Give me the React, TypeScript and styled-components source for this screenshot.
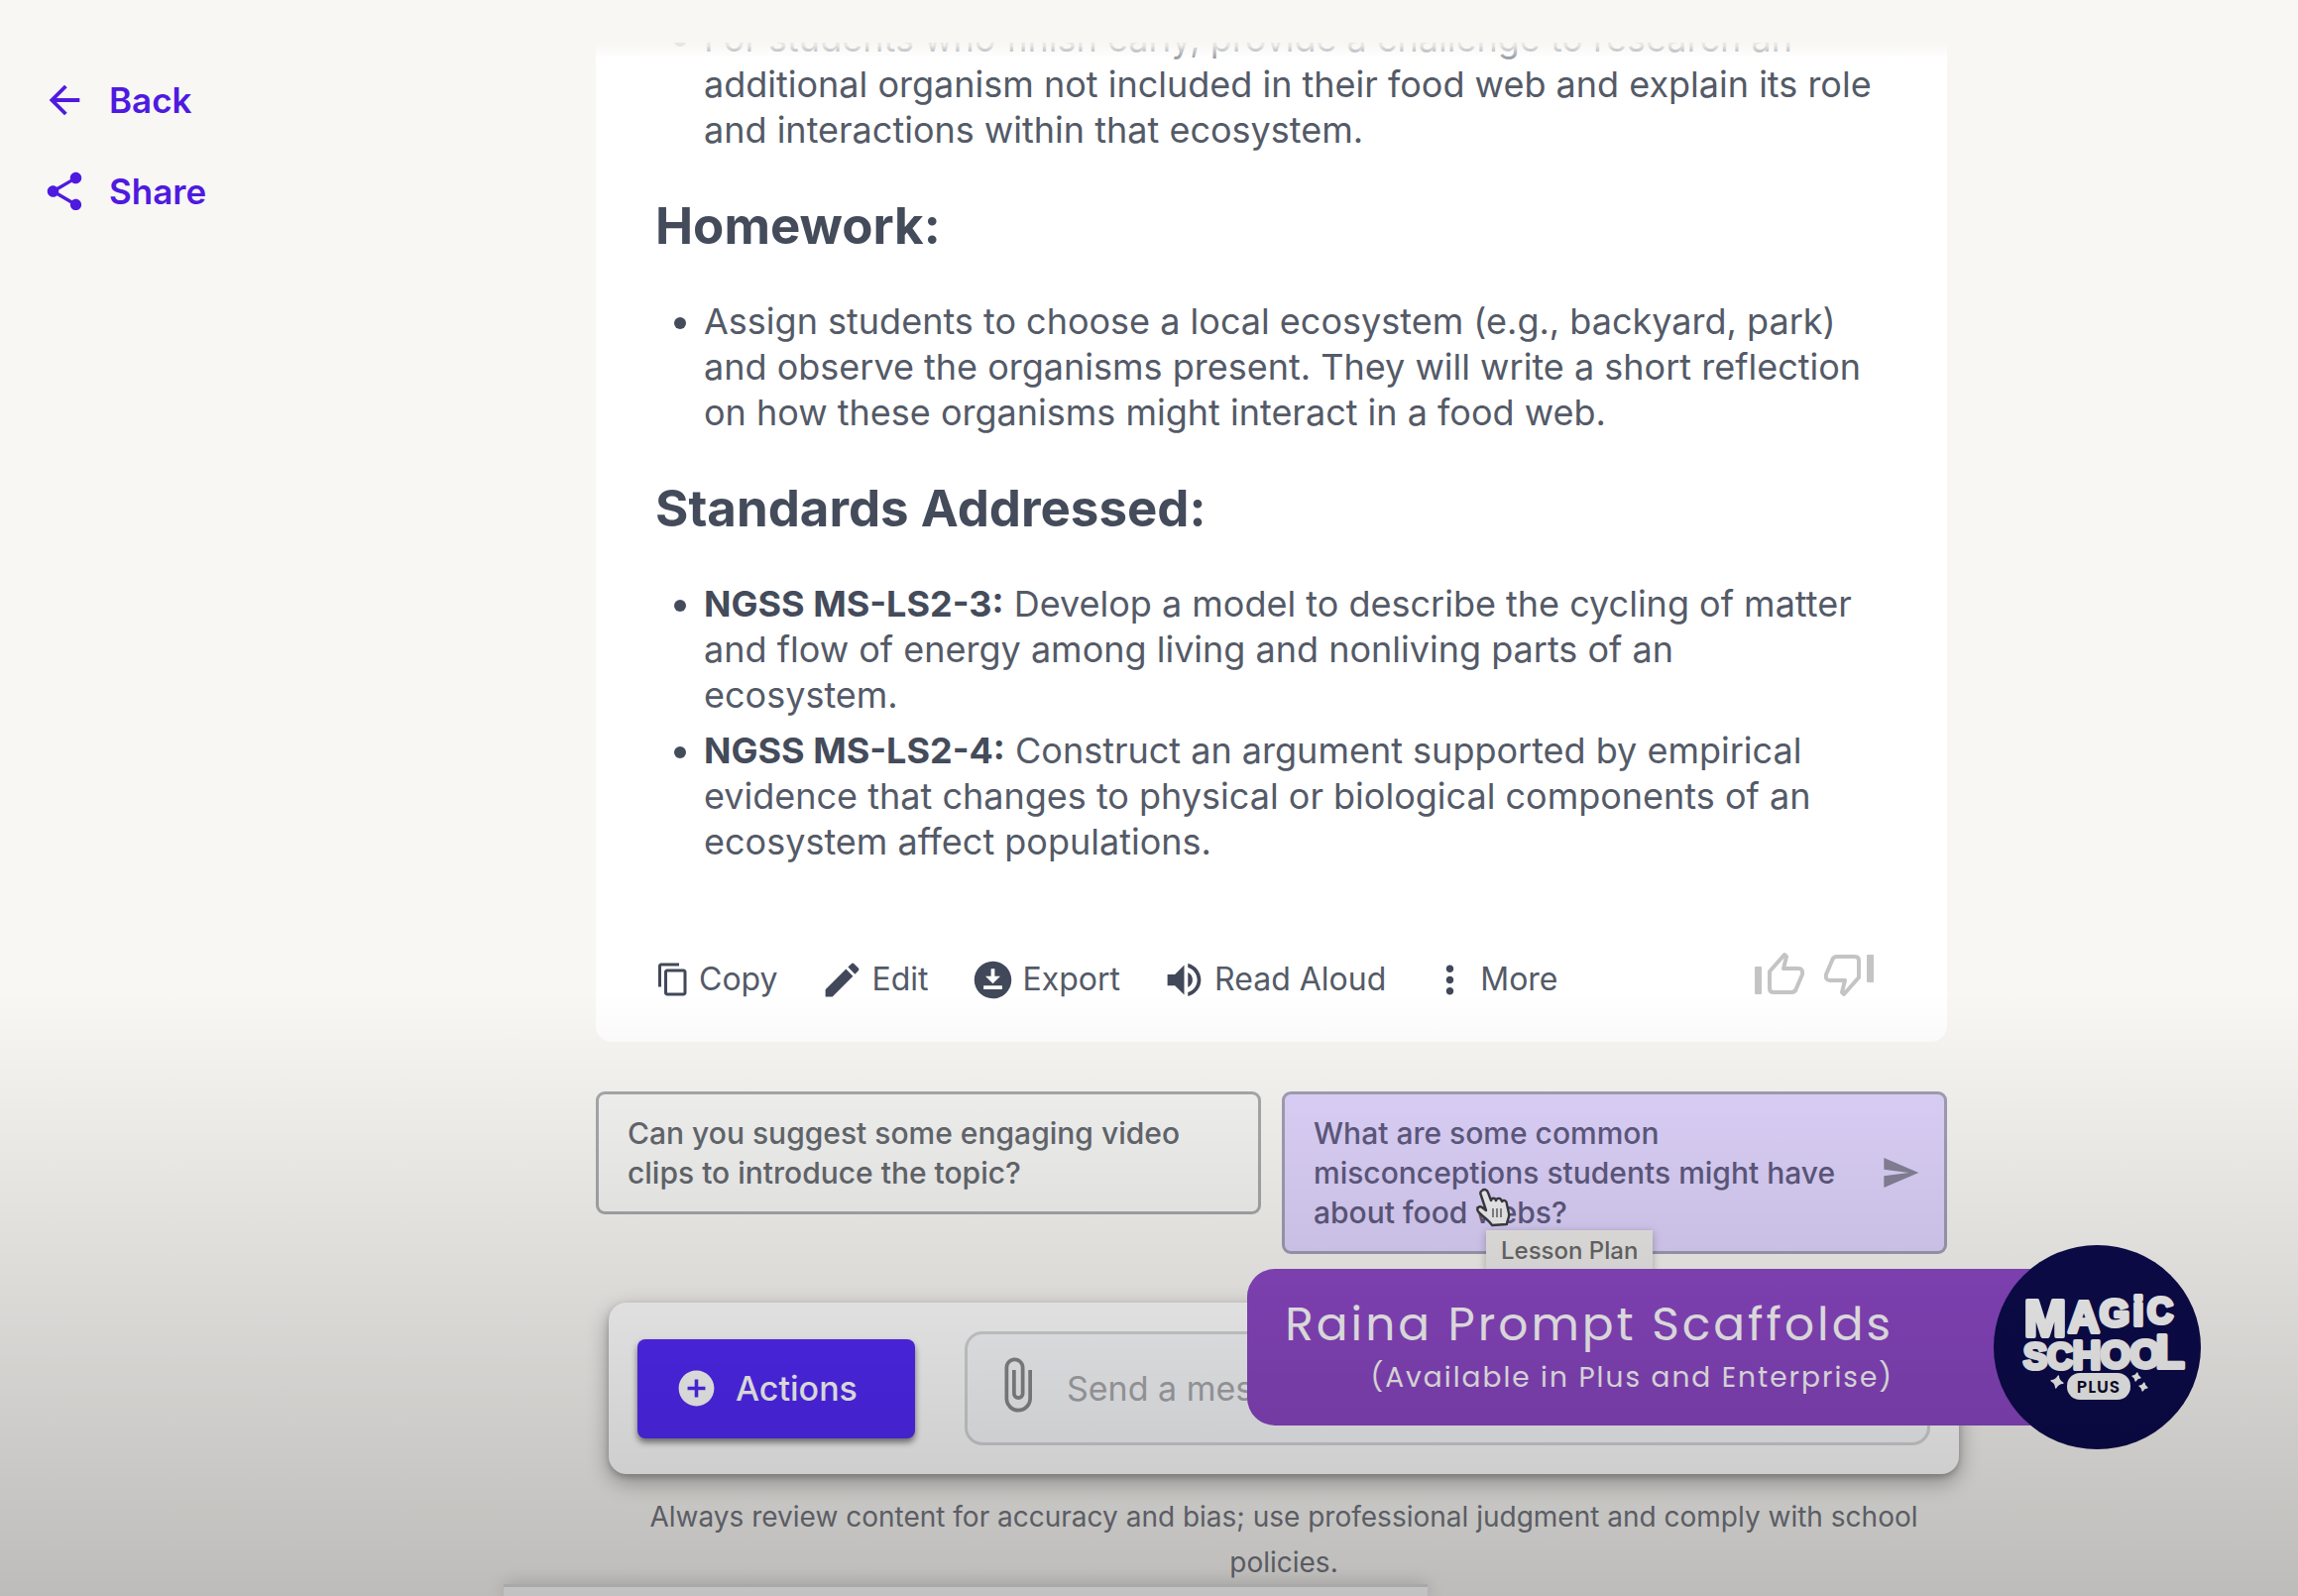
import React from "react";
import styled, { createGlobalStyle } from "styled-components";
import {
  MdAddCircle,
  MdArrowBack,
  MdAttachFile,
  MdContentCopy,
  MdDownloadForOffline,
  MdEdit,
  MdMoreVert,
  MdSend,
  MdShare,
  MdVolumeUp,
} from "react-icons/md";

const GlobalStyle = createGlobalStyle`
  *, *::before, *::after { box-sizing: border-box; }
  html, body { margin: 0; background: #f8f7f4; }
  body { font-family: Inter, "Liberation Sans", sans-serif; color: #545a67; }
  button, input { font: inherit; color: inherit; }
`;

const Page = styled.div`
  position: relative;
  min-height: 100vh;
  overflow: hidden;
  display: grid;
  grid-template-columns: 601px minmax(0, 1fr) 354px;
  align-items: start;
`;

const SideNav = styled.nav`
  display: flex;
  flex-direction: column;
  align-items: flex-start;
  gap: 44px;
  padding: 77px 0 0 42px;
`;

const NavLink = styled.a`
  display: flex;
  align-items: center;
  gap: 22px;
  color: #4f1ae0;
  font-size: 35px;
  line-height: 48px;
  font-weight: 600;
  text-decoration: none;
`;

const Main = styled.main`
  display: flex;
  flex-direction: column;
`;

const Card = styled.article`
  position: relative;
  margin-top: 43px;
  padding: 0 60px 34px;
  overflow: hidden;
  background: #fff;
  border-radius: 0 0 16px 16px;

  &::before {
    content: "";
    position: absolute;
    inset: 0 0 auto;
    height: 26px;
    background: linear-gradient(rgba(248, 247, 244, 0.9) 10%, rgba(255, 255, 255, 0.4) 60%, rgba(255, 255, 255, 0));
  }
`;

const Bullets = styled.ul<{ $clipped?: boolean }>`
  display: flex;
  flex-direction: column;
  gap: 10px;
  margin: ${(p) => (p.$clipped ? "-27px" : "0")} 0 0;
  padding: 0 12px 0 49px;
  font-size: 36px;
  line-height: 46px;

  strong { color: #444b5a; font-weight: 700; }
  li::marker { color: #444b5a; }
`;

const Heading = styled.h2`
  margin: 42px 0 41px;
  color: #444b5a;
  font-size: 51px;
  line-height: 64px;
  font-weight: 700;
`;

const Toolbar = styled.div`
  display: flex;
  align-items: center;
  gap: 42px;
  margin-top: 87px;
`;

const ToolButton = styled.button`
  display: flex;
  align-items: center;
  gap: 8px;
  padding: 0;
  border: 0;
  background: none;
  font-size: 32px;
  line-height: 46px;

  svg { color: #414859; }
`;

const Votes = styled.div`
  display: flex;
  gap: 20px;
  margin-left: auto;
  padding: 0 14px 10px 0;
`;

const VoteButton = styled.button<{ $down?: boolean }>`
  display: flex;
  padding: 0;
  border: 0;
  background: none;
  color: #c4c4c4;

  svg { transform: ${(p) => (p.$down ? "rotate(180deg)" : "none")}; }
`;

const Suggestions = styled.div`
  display: grid;
  grid-template-columns: 1fr 1fr;
  align-items: start;
  gap: 21px;
  margin-top: 50px;
`;

const Suggestion = styled.button<{ $active?: boolean }>`
  position: relative;
  display: flex;
  align-items: center;
  justify-content: space-between;
  padding: 19px 24px 19px 29px;
  border: 3px solid ${(p) => (p.$active ? "#a39fb5" : "#a9aaad")};
  border-radius: 9px;
  background: ${(p) => (p.$active ? "#e0d4fd" : "#f6f6f5")};
  color: ${(p) => (p.$active ? "#5f5b80" : "#65696e")};
  font-size: 30px;
  line-height: 40px;
  font-weight: 500;
  text-align: left;

  svg { flex: none; }
`;

const SuggestionText = styled.span`
  max-width: 570px;
`;

const SendMark = styled.span`
  display: flex;
  color: #88849a;
`;

const Pointer = styled.span`
  position: absolute;
  left: 192px;
  top: 94px;
  display: flex;
`;

const Tip = styled.span`
  position: absolute;
  left: 203px;
  top: 137px;
  padding: 0 15px;
  background: #edecea;
  box-shadow: 0 2px 8px rgba(0, 0, 0, 0.25);
  color: #6a6a6a;
  font-size: 24px;
  line-height: 42px;
  font-weight: 500;
  white-space: nowrap;
`;

const Composer = styled.form`
  display: flex;
  align-items: center;
  gap: 50px;
  margin: 49px -12px 0 13px;
  padding: 29px;
  border-radius: 18px;
  background: #fff;
  box-shadow: 0 8px 22px rgba(0, 0, 0, 0.32), 0 3px 6px rgba(0, 0, 0, 0.2);
`;

const ActionsButton = styled.button`
  display: flex;
  align-items: center;
  gap: 18px;
  height: 100px;
  padding: 0 58px 0 38px;
  border: 0;
  border-radius: 8px;
  background: #5229f7;
  box-shadow: 0 4px 6px rgba(0, 0, 0, 0.5);
  color: #fff;
  font-size: 34px;
  font-weight: 500;
`;

const MessageBox = styled.label`
  flex: 1;
  min-width: 0;
  display: flex;
  align-items: center;
  gap: 20px;
  height: 115px;
  padding: 0 20px;
  border: 3px solid #d6d7d9;
  border-radius: 18px;
  background: #fafbfe;
  color: #898a8d;

  svg { flex: none; margin-bottom: 8px; }
`;

const MessageInput = styled.input`
  flex: 1;
  min-width: 0;
  padding: 0;
  border: 0;
  outline: 0;
  background: none;
  font-size: 34px;

  &::placeholder { color: #aaabae; opacity: 1; }
`;

const Disclaimer = styled.p`
  margin: 20px -12px 0 13px;
  padding: 0 40px;
  color: #73757e;
  font-size: 28px;
  line-height: 46px;
  text-align: center;
`;

const BottomSheet = styled.div`
  position: absolute;
  left: 508px;
  bottom: 0;
  width: 932px;
  height: 12px;
  border-top: 3px solid #dcdcdc;
  background: #ffffff;
  box-shadow: 0 0 18px rgba(0, 0, 0, 0.2);
`;

const Banner = styled.aside`
  position: absolute;
  right: 98px;
  bottom: 148px;
  display: flex;
  align-items: center;
`;

const BannerLabel = styled.div`
  width: 857px;
  margin-right: -104px;
  padding: 24px 205px 26px 0;
  border-radius: 28px 0 0 28px;
  background: #8b47c4;
  color: #f9f7fa;
  font-family: Poppins, Lato, sans-serif;
  text-align: right;
`;

const BannerTitle = styled.div`
  font-size: 47px;
  line-height: 64px;
  letter-spacing: 3px;
`;

const BannerNote = styled.div`
  font-size: 28px;
  line-height: 44px;
  letter-spacing: 2px;
`;

const Badge = styled.div`
  position: relative;
  display: flex;
  flex: none;
  width: 209px;
  height: 206px;
  border-radius: 50%;
  background: #0c0b4c;
`;

const Shade = styled.div`
  position: absolute;
  inset: auto 0 0;
  height: 610px;
  background: linear-gradient(rgba(0, 0, 0, 0), rgba(0, 0, 0, 0.24));
  pointer-events: none;
`;

const Thumb = () => (
  <svg width="50" height="48" viewBox="0 0 50 48" aria-hidden="true">
    <rect x="0" y="16" width="7" height="28" rx="1" fill="currentColor" />
    <path
      d="M15 21 L30 4 L32 6 L29 18 H44 Q49 18 48 24 L42 38 Q41 42 37 42 H19 Q15 42 15 38 Z"
      fill="none"
      stroke="currentColor"
      strokeWidth="4"
      strokeLinejoin="round"
    />
  </svg>
);

const HandPointer = () => (
  <svg width="36" height="40" viewBox="0 0 36 40" aria-hidden="true">
    <path
      d="M7 3 C9 1 12 2 13 5 L16 13 C17 10 20 10 21 13 C22 10 26 10 27 14 C29 12 32 13 32 17 L34 26 C35 30 32 33 32 37 L17 38 C14 33 7 29 3 24 C1 21 4 18 7 20 L11 23 L6 8 C5 6 5 4 7 3 Z"
      fill="#f3f3f3"
      stroke="#3c3b44"
      strokeWidth="2.4"
      strokeLinejoin="round"
    />
    <path d="M18 21 V30 M22 21 V30 M26 21 V30" stroke="#6c6b70" strokeWidth="1.6" />
  </svg>
);

type Glyph = { c: string; x: number; y: number; size: number };

const LOGO_ROWS: Glyph[][] = [
  [
    { c: "M", x: 52, y: 92, size: 51 },
    { c: "A", x: 91, y: 88, size: 44 },
    { c: "G", x: 122, y: 82, size: 39 },
    { c: "i", x: 146, y: 81, size: 41 },
    { c: "C", x: 168, y: 79, size: 36 },
  ],
  [
    { c: "S", x: 42, y: 125, size: 36 },
    { c: "C", x: 67, y: 125, size: 36 },
    { c: "H", x: 94, y: 125, size: 40 },
    { c: "O", x: 123, y: 124, size: 39 },
    { c: "O", x: 153, y: 124, size: 40 },
    { c: "L", x: 178, y: 124, size: 48 },
  ],
];

const Sparkle = ({ x, y, r }: { x: number; y: number; r: number }) => (
  <path
    transform={`translate(${x} ${y}) rotate(12)`}
    d={`M0 ${-r} Q${r / 5} ${-r / 5} ${r} 0 Q${r / 5} ${r / 5} 0 ${r} Q${-r / 5} ${r / 5} ${-r} 0 Q${-r / 5} ${-r / 5} 0 ${-r} Z`}
    fill="#fafafa"
    stroke="#fafafa"
    strokeWidth="1.5"
    strokeLinejoin="round"
  />
);

const Logo = () => (
  <svg width="209" height="206" viewBox="0 0 209 206" role="img" aria-label="Magic School Plus">
    <g
      fill="#fafafa"
      stroke="#fafafa"
      strokeWidth="4"
      strokeLinejoin="round"
      fontFamily="'Liberation Sans', Arial, sans-serif"
      fontWeight="700"
      textAnchor="middle"
    >
      {LOGO_ROWS.map((row, r) => (
        <text key={r}>
          {row.map((g, i) => (
            <tspan key={i} x={g.x} y={g.y} fontSize={g.size}>
              {g.c}
            </tspan>
          ))}
        </text>
      ))}
    </g>
    <rect x="74" y="129" width="64" height="27" rx="13" fill="#fafafa" />
    <text x="106" y="149" fontSize="17" fontWeight="600" letterSpacing="1" textAnchor="middle" fontFamily="Poppins, Lato, sans-serif" fill="#0c0b2c">
      PLUS
    </text>
    <Sparkle x={64} y={138} r={6} />
    <Sparkle x={144} y={133} r={4} />
    <Sparkle x={151} y={143} r={4} />
  </svg>
);

export default function App() {
  return (
    <>
      <GlobalStyle />
      <Page>
        <SideNav>
          <NavLink href="#back">
            <MdArrowBack size={46} />
            Back
          </NavLink>
          <NavLink href="#share">
            <MdShare size={46} />
            Share
          </NavLink>
        </SideNav>

        <Main>
          <Card>
            <Bullets $clipped>
              <li>
                For students who finish early, provide a challenge to research an additional organism not included in
                their food web and explain its role and interactions within that ecosystem.
              </li>
            </Bullets>
            <Heading>Homework:</Heading>
            <Bullets>
              <li>
                Assign students to choose a local ecosystem (e.g., backyard, park) and observe the organisms present.
                They will write a short reflection on how these organisms might interact in a food web.
              </li>
            </Bullets>
            <Heading>Standards Addressed:</Heading>
            <Bullets>
              <li>
                <strong>NGSS MS-LS2-3:</strong> Develop a model to describe the cycling of matter and flow of energy
                among living and nonliving parts of an ecosystem.
              </li>
              <li>
                <strong>NGSS MS-LS2-4:</strong> Construct an argument supported by empirical evidence that changes to
                physical or biological components of an ecosystem affect populations.
              </li>
            </Bullets>
            <Toolbar>
              <ToolButton type="button">
                <MdContentCopy size={36} />
                Copy
              </ToolButton>
              <ToolButton type="button">
                <MdEdit size={45} />
                Edit
              </ToolButton>
              <ToolButton type="button">
                <MdDownloadForOffline size={45} />
                Export
              </ToolButton>
              <ToolButton type="button">
                <MdVolumeUp size={45} />
                Read Aloud
              </ToolButton>
              <ToolButton type="button">
                <MdMoreVert size={45} />
                More
              </ToolButton>
              <Votes>
                <VoteButton type="button" aria-label="Good response">
                  <Thumb />
                </VoteButton>
                <VoteButton type="button" aria-label="Bad response" $down>
                  <Thumb />
                </VoteButton>
              </Votes>
            </Toolbar>
          </Card>

          <Suggestions>
            <Suggestion type="button">
              <SuggestionText>Can you suggest some engaging video clips to introduce the topic?</SuggestionText>
            </Suggestion>
            <Suggestion type="button" $active>
              <SuggestionText>What are some common misconceptions students might have about food webs?</SuggestionText>
              <SendMark>
                <MdSend size={40} />
              </SendMark>
              <Tip>Lesson Plan</Tip>
              <Pointer>
                <HandPointer />
              </Pointer>
            </Suggestion>
          </Suggestions>

          <Composer>
            <ActionsButton type="button">
              <MdAddCircle size={43} />
              Actions
            </ActionsButton>
            <MessageBox>
              <MdAttachFile size={60} />
              <MessageInput type="text" placeholder="Send a message" aria-label="Send a message" />
            </MessageBox>
          </Composer>
          <Disclaimer>
            Always review content for accuracy and bias; use professional judgment and comply with school policies.
          </Disclaimer>
        </Main>

        <BottomSheet />
        <Banner>
          <BannerLabel>
            <BannerTitle>Raina Prompt Scaffolds</BannerTitle>
            <BannerNote>(Available in Plus and Enterprise)</BannerNote>
          </BannerLabel>
          <Badge>
            <Logo />
          </Badge>
        </Banner>
        <Shade />
      </Page>
    </>
  );
}
